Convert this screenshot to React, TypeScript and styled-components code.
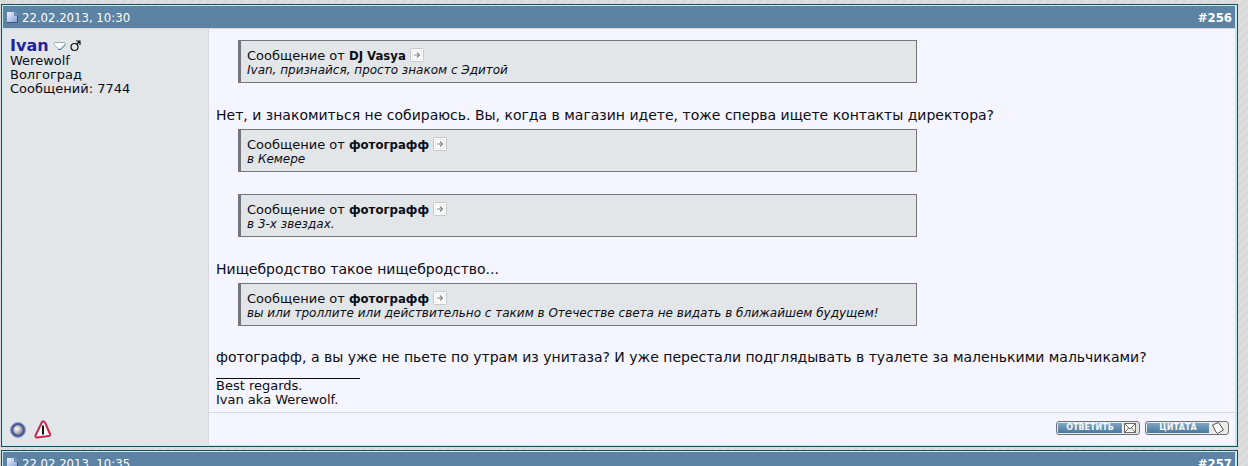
import React from 'react';
import styled, { createGlobalStyle } from 'styled-components';

const GlobalStyle = createGlobalStyle`
  body {
    margin: 0;
    overflow: hidden;
    color: #0c0c14;
    font-family: Verdana, 'DejaVu Sans', sans-serif;
    font-size: 13px;
    background: repeating-linear-gradient(135deg, #dedede 0 3px, #d8d8d8 3px 6px);
  }
`;

const Thread = styled.main`
  display: flex;
  flex-direction: column;
  gap: 3px;
  padding: 4px 10px 0 1px;
`;

const Post = styled.article`
  border: 1px solid #14505f;
  background: #c4e8f0;
  padding: 1px 2px 1px 1px;
`;

const PostHeader = styled.header`
  display: flex;
  align-items: center;
  gap: 4px;
  height: 22px;
  padding: 0 3px 0 4px;
  color: #fff;
  background: #5c82a4;
  font-family: 'DejaVu Sans Condensed', sans-serif;
`;

const PostNumber = styled.a`
  margin-left: auto;
  color: #fff;
  font-weight: bold;
  text-decoration: none;
`;

const PostGrid = styled.div`
  display: grid;
  grid-template-columns: 205px 1fr;
  grid-template-rows: 1fr 32px;
  column-gap: 1px;
  row-gap: 1px;
  padding-top: 1px;
  background: #d8d8e2;
`;

const Author = styled.aside`
  display: flex;
  flex-direction: column;
  justify-content: space-between;
  grid-row: 1 / 3;
  padding: 8px 6px 6px 7px;
  background: #e2e6e8;
  line-height: 14px;
`;

const AuthorName = styled.div`
  display: flex;
  align-items: center;
  gap: 4px;
  height: 17px;
`;

const NameLink = styled.a`
  color: #22229c;
  font-size: 16px;
  font-weight: bold;
  text-decoration: none;
`;

const IconRow = styled.div`
  display: flex;
  align-items: center;
  gap: 8px;
`;

const IconLink = styled.a`
  display: flex;
`;

const Content = styled.div`
  padding: 11px 5px 5px 7px;
  background: #f5f5ff;
`;

const Paragraph = styled.p`
  margin: 0 0 5px;
  font-size: 14px;
  line-height: 18px;
`;

const Quote = styled.blockquote<{ $gap: number }>`
  box-sizing: border-box;
  width: 67%;
  margin: 0 0 ${(p) => p.$gap}px 22px;
  padding: 6px 6px 4px;
  border: 1px solid #75757c;
  border-left-width: 3px;
  background: #e2e6e8;
  line-height: 15px;
`;

const QuoteHead = styled.div`
  display: flex;
  align-items: center;
  gap: 4px;
  height: 16px;
`;

const QuoteAuthor = styled.b`
  font-family: 'DejaVu Sans Condensed', sans-serif;
`;

const QuoteText = styled.div`
  font-size: 12px;
  font-style: italic;
`;

const Signature = styled.footer`
  padding-top: 7px;
  line-height: 14px;
`;

const SignatureRule = styled.hr`
  width: 144px;
  height: 1px;
  margin: 0;
  border: 0;
  background: #0c0c14;
`;

const Actions = styled.div`
  display: flex;
  justify-content: flex-end;
  align-items: center;
  gap: 5px;
  padding: 0 6px 2px 0;
  background: #f5f5ff;
`;

const ActionButton = styled.button`
  display: flex;
  width: 84px;
  height: 14px;
  padding: 1px;
  border: 1px solid #6f7073;
  border-radius: 3px;
  background: #e9ecef;
`;

const ActionLabel = styled.span`
  flex: 1;
  color: #f4f8fb;
  background: linear-gradient(#7fa6c3, #4a789e);
  font-family: 'DejaVu Sans', sans-serif;
  font-size: 8px;
  font-weight: bold;
  line-height: 10px;
  text-align: center;
`;

const DocIcon = () => (
  <svg width="11" height="12" viewBox="0 0 11 12" aria-hidden="true">
    <defs>
      <linearGradient id="doc" x1="0" y1="0" x2="1" y2="1">
        <stop offset="0" stopColor="#f0f4ff" />
        <stop offset="1" stopColor="#7c97d2" />
      </linearGradient>
    </defs>
    <path d="M0 1H8L11 4V12H0Z" fill="url(#doc)" />
    <path d="M0 11.5H10.5V4" fill="none" stroke="#3a5080" />
    <path d="M7.5 1.5L10.5 4.5H7.5Z" fill="#a9bfe6" stroke="#5f7cae" />
  </svg>
);

const MenuIcon = () => (
  <svg width="13" height="8" viewBox="0 0 13 8" aria-hidden="true">
    <path d="M1.5 0.5H11.5L12.5 2L7.5 7H5.5L0.5 2Z" fill="#fff" stroke="#8db2c0" />
    <path d="M5 7.5H8L12.5 2.5" fill="none" stroke="#53808f" />
  </svg>
);

const MaleIcon = () => (
  <svg width="11" height="12" viewBox="0 0 11 12" aria-hidden="true">
    <circle cx="4.5" cy="7" r="3.5" fill="none" stroke="#111" strokeWidth="1.2" />
    <path d="M6.5 4.5L9.5 1.5M6 1H10V5" fill="none" stroke="#111" strokeWidth="1.2" />
  </svg>
);

const StatusIcon = () => (
  <svg width="16" height="16" viewBox="0 0 16 16" aria-hidden="true">
    <defs>
      <radialGradient id="orb" cx="0.4" cy="0.4" r="0.6">
        <stop offset="0" stopColor="#fff" />
        <stop offset="1" stopColor="#77777a" />
      </radialGradient>
    </defs>
    <circle cx="8" cy="8" r="6" fill="url(#orb)" stroke="#4c5a9a" strokeWidth="2.6" />
    <circle cx="8" cy="8" r="7.4" fill="none" stroke="#7f8cc6" />
  </svg>
);

const ReportIcon = () => (
  <svg width="18" height="19" viewBox="0 0 18 19" aria-hidden="true">
    <path d="M8 2Q9.5 0.5 11 2.5L16 14Q16.5 16 14.5 16L3 17.5Q1 17.5 1.5 15.5Z" fill="#fff" stroke="#c62750" strokeWidth="2" strokeLinejoin="round" />
    <path d="M9 5.5V14.5" stroke="#111" strokeWidth="2" />
  </svg>
);

const JumpIcon = () => (
  <svg width="14" height="14" viewBox="0 0 14 14" aria-hidden="true">
    <rect x="0.5" y="0.5" width="13" height="13" rx="1" fill="#fcfcfc" stroke="#c6c8ca" />
    <rect x="2.5" y="2.5" width="9" height="9" fill="none" stroke="#dedede" strokeDasharray="1 1" />
    <path d="M4 7H9.5M7 4.5L9.5 7L7 9.5" fill="none" stroke="#888" strokeWidth="1.2" />
  </svg>
);

const MailIcon = () => (
  <svg width="16" height="10" viewBox="0 0 16 10" aria-hidden="true">
    <rect width="16" height="10" fill="#e4e2df" />
    <path d="M0.5 0V10" stroke="#fff" />
    <rect x="2.5" y="0.5" width="11" height="9" fill="#f8f8f6" stroke="#6b6b6d" />
    <path d="M3 1L8 6L13 1M3 9L6.5 5M13 9L9.5 5" fill="none" stroke="#6b6b6d" />
  </svg>
);

const NoteIcon = () => (
  <svg width="18" height="10" viewBox="0 0 18 10" overflow="visible" aria-hidden="true">
    <rect width="18" height="10" fill="#eceae8" />
    <path d="M3.5 2L9.5 -0.5L10.5 1L14.5 7L8.5 10.5L7 9Z" fill="#fff" stroke="#4d4d50" />
  </svg>
);

const QuoteBlock = ({ author, gap, children }: { author: string; gap: number; children: React.ReactNode }) => (
  <Quote $gap={gap}>
    <QuoteHead>
      <span>Сообщение от <QuoteAuthor>{author}</QuoteAuthor></span>
      <IconLink href="#quoted" aria-label="Перейти к сообщению"><JumpIcon /></IconLink>
    </QuoteHead>
    <QuoteText>{children}</QuoteText>
  </Quote>
);

const Header = ({ date, number }: { date: string; number: number }) => (
  <PostHeader>
    <DocIcon />
    <time>{date}</time>
    <PostNumber href={`#post${number}`}>#{number}</PostNumber>
  </PostHeader>
);

export default function App() {
  return (
    <>
      <GlobalStyle />
      <Thread>
        <Post>
          <Header date="22.02.2013, 10:30" number={256} />
          <PostGrid>
            <Author>
              <div>
                <AuthorName>
                  <NameLink href="#ivan">Ivan</NameLink>
                  <MenuIcon />
                  <MaleIcon />
                </AuthorName>
                <div>Werewolf</div>
                <div>Волгоград</div>
                <div>Сообщений: 7744</div>
              </div>
              <IconRow>
                <IconLink href="#status" aria-label="Статус"><StatusIcon /></IconLink>
                <IconLink href="#report" aria-label="Пожаловаться"><ReportIcon /></IconLink>
              </IconRow>
            </Author>
            <Content>
              <QuoteBlock author="DJ Vasya" gap={23}>Ivan, признайся, просто знаком с Эдитой</QuoteBlock>
              <Paragraph>Нет, и знакомиться не собираюсь. Вы, когда в магазин идете, тоже сперва ищете контакты директора?</Paragraph>
              <QuoteBlock author="фотографф" gap={22}>в Кемере</QuoteBlock>
              <QuoteBlock author="фотографф" gap={23}>в 3-х звездах.</QuoteBlock>
              <Paragraph>Нищебродство такое нищебродство...</Paragraph>
              <QuoteBlock author="фотографф" gap={22}>вы или троллите или действительно с таким в Отечестве света не видать в ближайшем будущем!</QuoteBlock>
              <Paragraph>фотографф, а вы уже не пьете по утрам из унитаза? И уже перестали подглядывать в туалете за маленькими мальчиками?</Paragraph>
              <Signature>
                <SignatureRule />
                <div>Best regards.</div>
                <div>Ivan aka Werewolf.</div>
              </Signature>
            </Content>
            <Actions>
              <ActionButton type="button"><ActionLabel>ОТВЕТИТЬ</ActionLabel><MailIcon /></ActionButton>
              <ActionButton type="button"><ActionLabel>ЦИТАТА</ActionLabel><NoteIcon /></ActionButton>
            </Actions>
          </PostGrid>
        </Post>
        <Post>
          <Header date="22.02.2013, 10:35" number={257} />
        </Post>
      </Thread>
    </>
  );
}
